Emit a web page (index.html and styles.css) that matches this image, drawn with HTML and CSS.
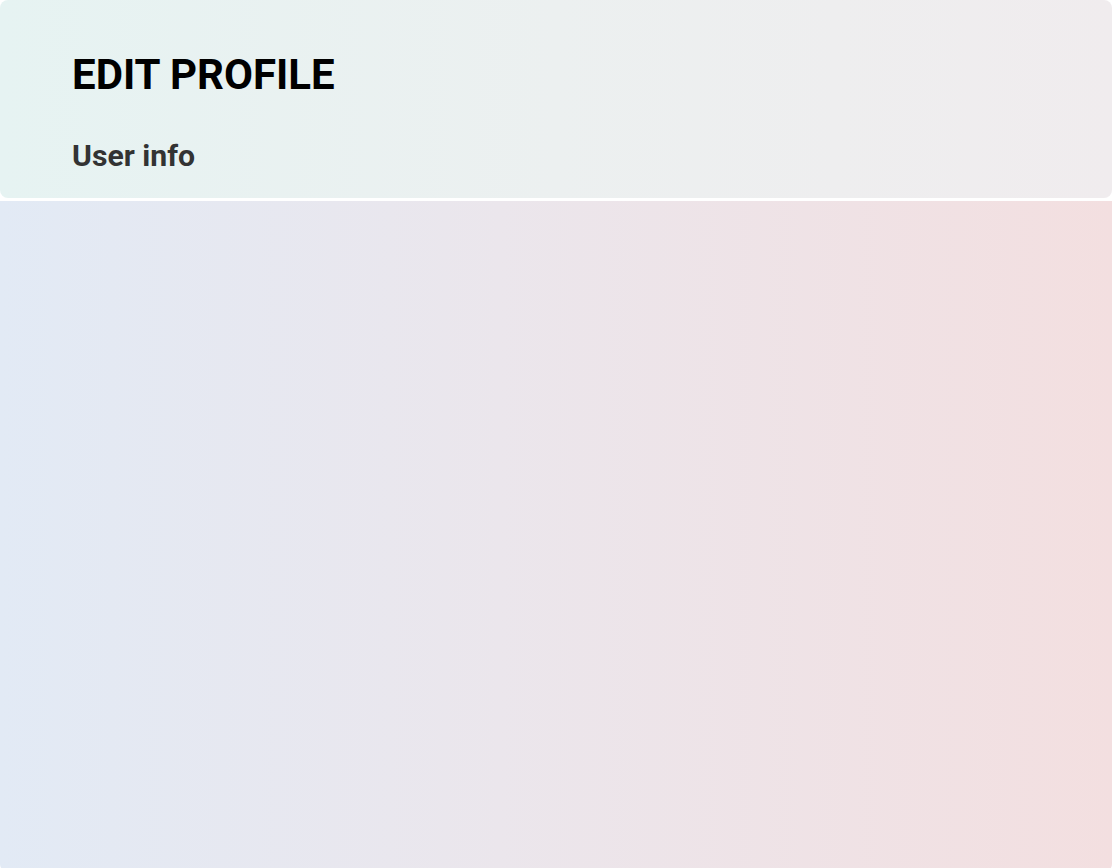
FILE: index.html
```html
<!DOCTYPE html>
<html>
<head>
<meta charset="utf-8">
<link rel="stylesheet" href="styles.css">
</head>
<body>
<div class="page">
  <header class="card">
    <h1 class="title">EDIT PROFILE</h1>
    <h2 class="subtitle">User info</h2>
  </header>
  <main class="panel"></main>
</div>
</body>
</html>
```
FILE: styles.css
```css
html, body {
  margin: 0;
  padding: 0;
  background: #ffffff;
  height: 100%;
}
body {
  font-family: Roboto, "Liberation Sans", sans-serif;
  overflow: hidden;
}
.page {
  display: flex;
  flex-direction: column;
  gap: 3px;
  height: 868px;
}
.card {
  height: 198px;
  box-sizing: border-box;
  padding: 50px 72px 0;
  border-radius: 8px;
  background: linear-gradient(90deg, #e6f3f2 0%, #ecf0f0 50%, #f0ecee 100%);
}
.title {
  margin: 0;
  font-size: 42px;
  font-weight: 700;
  color: #000;
  line-height: 50px;
}
.subtitle {
  margin: 39px 0 0;
  font-size: 30.2px;
  font-weight: 700;
  color: #333333;
  line-height: 34px;
}
.panel {
  flex: 1;
  margin-bottom: -4px;
  border-radius: 0 0 8px 8px;
  background: linear-gradient(90deg, #e2eaf5 0%, #ebe6ec 45%, #f3dfe0 100%);
}
```
